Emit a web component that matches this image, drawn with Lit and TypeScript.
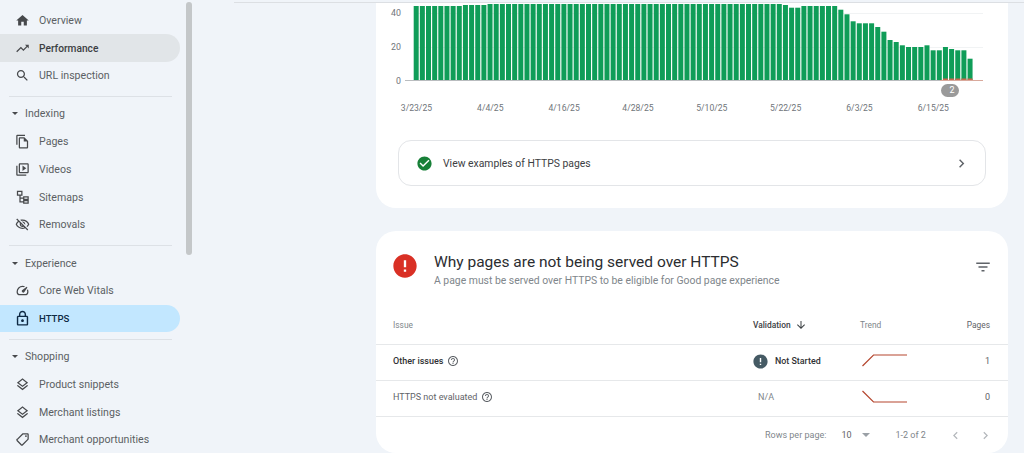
import { LitElement, html, css, svg } from "lit";
import { customElement } from "lit/decorators.js";

const P: Record<string, string> = {
  home: "M10 20v-6h4v6h5v-8h3L12 3 2 12h3v8z",
  trend: "M16 6l2.29 2.29-4.88 4.88-4-4L2 16.59 3.41 18l6-6 4 4 6.3-6.29L22 12V6z",
  search: "M15.5 14h-.79l-.28-.27C15.41 12.59 16 11.11 16 9.5 16 5.91 13.09 3 9.5 3S3 5.91 3 9.5 5.91 16 9.5 16c1.61 0 3.09-.59 4.23-1.57l.27.28v.79l5 4.99L20.49 19l-4.99-5zm-6 0C7.01 14 5 11.99 5 9.5S7.01 5 9.5 5 14 7.01 14 9.5 11.99 14 9.5 14z",
  pages: "M16 1H4c-1.1 0-2 .9-2 2v14h2V3h12V1zm-1 4H8c-1.1 0-1.99.9-1.99 2L6 21c0 1.1.89 2 1.99 2H19c1.1 0 2-.9 2-2V11l-6-6zM8 21V7h6v5h5v9H8z",
  videos: "M4 6H2v14c0 1.1.9 2 2 2h14v-2H4V6zm16-4H8c-1.1 0-2 .9-2 2v12c0 1.1.9 2 2 2h12c1.1 0 2-.9 2-2V4c0-1.1-.9-2-2-2zm0 14H8V4h12v12zM12 5.5v9l6-4.5z",
  sitemaps: "M3 1h9v8H9v3h4v-2h9v6h-9v-2H9v4h4v-2h9v6h-9v-2H7V9H3V1zm2 2v4h5V3H5zm10 9v2h5v-2h-5zm0 6v2h5v-2h-5z",
  removals: "M12 6c3.79 0 7.17 2.13 8.82 5.5-.59 1.22-1.42 2.27-2.41 3.12l1.41 1.41c1.39-1.23 2.49-2.77 3.18-4.53C21.27 7.11 17 4 12 4c-1.27 0-2.49.2-3.64.57l1.65 1.65C10.66 6.09 11.32 6 12 6zm-1.07 1.14L13 9.21c.57.25 1.03.71 1.28 1.28l2.07 2.07c.08-.34.14-.7.14-1.07C16.5 9.01 14.48 7 12 7c-.37 0-.72.05-1.07.14zM2.01 3.87l2.68 2.68C3.06 7.83 1.77 9.53 1 11.5 2.73 15.89 7 19 12 19c1.52 0 2.98-.29 4.32-.82l3.42 3.42 1.41-1.41L3.42 2.45 2.01 3.87zm7.5 7.5l2.61 2.61c-.04.01-.08.02-.12.02-1.38 0-2.5-1.12-2.5-2.5 0-.05.01-.08.01-.13zm-3.4-3.4l1.75 1.75c-.23.55-.36 1.15-.36 1.78 0 2.48 2.02 4.5 4.5 4.5.63 0 1.23-.13 1.77-.36l.98.98c-.88.24-1.8.38-2.75.38-3.79 0-7.17-2.13-8.82-5.5.7-1.43 1.72-2.61 2.93-3.53z",
  vitals: "M12 4.5a9.5 9.5 0 0 0-9.5 9.5c0 1.3.2 2.5.8 3.5.8 1.4 2.1 2.2 3.6 2.2h10.2c1.5 0 2.8-.8 3.6-2.2.6-1 .8-2.2.8-3.5 0-1.4-.3-2.7-.8-3.9l-1.6 1.6c.3.7.4 1.5.4 2.3 0 1-.2 1.8-.6 2.5-.4.7-1.1 1.2-1.8 1.2H6.9c-.7 0-1.4-.5-1.8-1.2-.4-.7-.6-1.5-.6-2.5A7.500 7.500 0 0 1 12 6.500c.8 0 1.6.1 2.3.4L16 5.300a9.500 9.500 0 0 0-4-.8zm6.700 1.300l-6.900 5.200a2.300 2.300 0 1 0 3.200 3.200l4.900-7.200-1.200-1.200z",
  lock: "M18 8h-1V6c0-2.76-2.24-5-5-5S7 3.24 7 6v2H6c-1.1 0-2 .9-2 2v10c0 1.1.9 2 2 2h12c1.1 0 2-.9 2-2V10c0-1.1-.9-2-2-2zM9 6c0-1.66 1.34-3 3-3s3 1.34 3 3v2H9V6zm9 14H6V10h12v10zm-6-3c1.1 0 2-.9 2-2s-.9-2-2-2-2 .9-2 2 .9 2 2 2z",
  layers: "M11.99 18.54l-7.37-5.73L3 14.07l9 7 9-7-1.63-1.27-7.38 5.74zM12 16l7.36-5.73L21 9l-9-7-9 7 1.63 1.27L12 16zm0-11.47L17.74 9 12 13.47 6.26 9 12 4.53z",
  tag: "M2.59 11.58l9-9C11.95 2.22 12.45 2 13 2h7c1.1 0 2 .9 2 2v7c0 .55-.22 1.05-.59 1.42l-9 9c-.36.36-.86.58-1.41.58s-1.05-.22-1.41-.59l-7-7C2.22 13.05 2 12.55 2 12s.23-1.06.59-1.42zM11 20.01l9-9.01V4h-7v-.01l-9 9 7 7.02zM17.5 5a1.5 1.5 0 1 1 0 3 1.5 1.5 0 0 1 0-3z",
  check: "M12 2C6.48 2 2 6.48 2 12s4.48 10 10 10 10-4.48 10-10S17.52 2 12 2zm-2 15l-5-5 1.41-1.41L10 14.17l7.59-7.59L19 8l-9 9z",
  error: "M12 2C6.48 2 2 6.48 2 12s4.48 10 10 10 10-4.48 10-10S17.52 2 12 2zm1 15h-2v-2h2v2zm0-4h-2V7h2v6z",
  help: "M11 18h2v-2h-2v2zm1-16C6.48 2 2 6.48 2 12s4.48 10 10 10 10-4.48 10-10S17.52 2 12 2zm0 18c-4.41 0-8-3.59-8-8s3.59-8 8-8 8 3.59 8 8-3.59 8-8 8zm0-14c-2.21 0-4 1.79-4 4h2c0-1.1.9-2 2-2s2 .9 2 2c0 2-3 1.75-3 5h2c0-2.25 3-2.5 3-5 0-2.21-1.79-4-4-4z",
  filter: "M10 18h4v-2h-4v2zM3 6v2h18V6H3zm3 7h12v-2H6v2z",
  right: "M10 6L8.59 7.41 13.17 12l-4.58 4.59L10 18l6-6z",
  left: "M15.41 7.41L14 6l-6 6 6 6 1.41-1.41L10.83 12z",
  down: "M20 12l-1.41-1.41L13 16.17V4h-2v12.17l-5.58-5.59L4 12l8 8 8-8z",
};

const icon = (name: string, cls = "") =>
  html`<svg class="ic ${cls}" viewBox="0 0 24 24" fill="currentColor"><path d=${P[name]}></path></svg>`;

type Item = { icon: string; label: string; state?: string };
type Group = { title?: string; items: Item[] };

const NAV: Group[] = [
  { items: [
    { icon: "home", label: "Overview" },
    { icon: "trend", label: "Performance", state: "grey" },
    { icon: "search", label: "URL inspection" },
  ] },
  { title: "Indexing", items: [
    { icon: "pages", label: "Pages" },
    { icon: "videos", label: "Videos" },
    { icon: "sitemaps", label: "Sitemaps" },
    { icon: "removals", label: "Removals" },
  ] },
  { title: "Experience", items: [
    { icon: "vitals", label: "Core Web Vitals" },
    { icon: "lock", label: "HTTPS", state: "blue" },
  ] },
  { title: "Shopping", items: [
    { icon: "layers", label: "Product snippets" },
    { icon: "layers", label: "Merchant listings" },
    { icon: "tag", label: "Merchant opportunities" },
  ] },
];

// Heights of the bars above the baseline, in pixels.
const run = (n: number, h: number) => Array<number>(n).fill(h);
const BARS: number[] = [
  ...run(8, 75), ...run(4, 76), ...run(48, 78),
  76, ...run(2, 73.3), ...run(6, 75), 71.3, 66.7, 59.7, ...run(3, 57.7), 54, 49.3,
  41, 39, 35.7, ...run(3, 34), 35.7, ...run(2, 30.7), 34, 32, 30.7, 30.7, 22.3,
];
const PITCH = 6.154;
const DATES = ["3/23/25", "4/4/25", "4/16/25", "4/28/25", "5/10/25", "5/22/25", "6/3/25", "6/15/25"];

@customElement("app-root")
export class AppRoot extends LitElement {
  static styles = css`
    :host {
      display: block;
      width: 1024px;
      height: 453px;
      overflow: hidden;
      background: #f0f4f9;
      font-family: Roboto, "Liberation Sans", sans-serif;
      color: #444746;
    }
    * { box-sizing: border-box; }
    .page { display: flex; height: 453px; position: relative; }
    .ic { width: 14px; height: 14px; flex: none; display: block; }

    /* sidebar */
    .side { width: 234px; flex: none; padding-top: 6.5px; }
    .scroll {
      position: absolute; left: 186px; top: 2px; width: 5.5px; height: 253px;
      border-radius: 3px; background: #c4c7c9;
    }
    .rule { width: 163px; height: 1px; margin: 6.4px 0 3.2px 9px; background: #dde1e6; }
    .row {
      width: 180px; height: 27.7px; display: flex; align-items: center;
      padding-left: 15px; font-size: 10.6px;
      border-radius: 0 14px 14px 0; color: #5b5f63;
    }
    .row .ic { width: 15px; height: 15px; margin-right: 9px; color: #47494c; }
    .row .ic.lock { width: 17px; height: 17px; margin-left: -1px; margin-right: 8px; }
    .row.grey { background: #e1e5e8; color: #3c4043; font-weight: 500; font-size: 10.2px; }
    .row.blue { background: #c2e7ff; color: #0f2a44; font-weight: 500; font-size: 9.6px; }
    .row.blue .ic { color: #0f2a44; }
    .head { width: 180px; height: 27.7px; display: flex; align-items: center; padding-left: 12px; font-size: 10.6px; color: #5b5f63; }
    .caret { width: 0; height: 0; margin-right: 7px; border: 3px solid transparent; border-top: 3.5px solid #47494c; border-bottom: 0; }

    /* main */
    .main { flex: 1; min-width: 0; display: flex; flex-direction: column; gap: 23px; padding: 2px 16px 0 142px; position: relative; }
    .topline { position: absolute; left: 0; right: 0; top: 2px; height: 1px; background: #dcdfe3; }
    .card { background: #fff; width: 632px; flex: none; }
    .c1 { height: 206px; border-radius: 0 0 20px 20px; padding-top: 2px; }
    .c2 { height: 222px; border-radius: 20px; }

    /* chart */
    .chart { display: flex; height: 77px; }
    .yaxis {
      width: 25px; flex: none; height: 82px; display: flex; flex-direction: column;
      justify-content: space-between; align-items: flex-end; margin-top: 2px;
      font-size: 8.8px; line-height: 14px; color: #70757a;
    }
    .plot { position: relative; width: 578px; margin-left: 4px; height: 77px; }
    .grid { position: absolute; left: 10px; right: 0; height: 1px; background: #f1f3f4; }
    .bars { position: absolute; inset: 0; width: 578px; height: 77px; display: block; }
    .pill {
      position: absolute; left: 535.5px; top: 80px; width: 18px; height: 13px;
      border-radius: 7px; background: #9a9a9a; color: #fff;
      font-size: 9px; line-height: 13px; text-align: center; padding-left: 5px;
    }
    .dates {
      display: grid; grid-template-columns: repeat(8, 73.85px);
      margin: 20px 0 0 3.5px; font-size: 8.6px; line-height: 14px; color: #70757a; text-align: center;
    }
    .link {
      display: flex; align-items: center; height: 46px; margin: 25px 22px 0;
      border: 1px solid #e3e5e8; border-radius: 13px; padding: 0 15px 0 17px;
      font-size: 10.4px; color: #3c4043;
    }
    .link .ok { width: 17px; height: 17px; color: #188038; margin-right: 10px; }
    .link .ch { margin-left: auto; width: 17px; height: 17px; color: #5f6368; }

    /* issues card */
    .hdr { display: flex; height: 76px; padding: 19px 16px 0 15px; }
    .hdr .err { width: 28px; height: 28px; color: #d93025; margin: 2px 15px 0 0; }
    .title { font-size: 15.5px; line-height: 24px; color: #2b2d30; }
    .sub { font-size: 10.4px; line-height: 14px; color: #80868b; }
    .hdr .flt { width: 18px; height: 18px; margin: 8px 0 0 auto; color: #5f6368; }
    .tr {
      display: grid; grid-template-columns: 360px 107px 60px 71px; align-items: center;
      padding: 0 17px 3px; height: 36px; border-bottom: 1px solid #e6e8ea; font-size: 9px; color: #5f6368;
    }
    .tr.th { height: 38px; padding-bottom: 2px; font-size: 8.4px; color: #80868b; }
    .th .v { display: flex; align-items: center; gap: 4px; font-weight: 500; color: #3c4043; font-size: 8.4px; }
    .th .v .ic { width: 12px; height: 12px; }
    .num { text-align: right; padding-right: 1px; color: #5f6368; }
    .name { display: flex; align-items: center; gap: 4px; }
    .name .ic { width: 12px; height: 12px; color: #5f6368; }
    .name.b { font-weight: 500; color: #303134; }
    .status { display: flex; align-items: center; gap: 5px; font-weight: 500; font-size: 8.9px; color: #303134; }
    .status .ic { width: 17px; height: 17px; color: #455a64; margin-left: -1px; margin-right: 1px; }
    .na { padding-left: 5px; color: #80868b; }
    .spark { width: 46px; height: 14px; display: block; margin-left: 2px; }
    .foot { display: flex; align-items: center; height: 36px; font-size: 9px; color: #80868b; white-space: nowrap; padding-left: 389px; }
    .foot .n { margin-left: 15px; color: #5f6368; }
    .foot .tri { margin-left: 10px; width: 0; height: 0; border: 4px solid transparent; border-top: 4px solid #9aa0a6; border-bottom: 0; }
    .foot .r { margin-left: 26px; }
    .foot .ic { width: 15px; height: 15px; color: #b4b8bc; }
    .foot .p { margin-left: 22px; }
    .foot .q { margin-left: 15px; }
  `;

  private chart() {
    return html`
      <div class="chart">
        <div class="yaxis"><span>40</span><span>20</span><span>0</span></div>
        <div class="plot">
          <div class="grid" style="top:9px"></div>
          <div class="grid" style="top:43px"></div>
          <svg class="bars" viewBox="0 0 578 77">
            ${BARS.map((h, i) => {
              const x = 8.7 + i * PITCH;
              return svg`<rect x=${x} y=${77 - h} width="5" height=${h} fill="#0f9d58"></rect>
                ${i >= 86 ? svg`<rect x=${x} y="74.5" width="5" height="2.5" fill="#c8694f"></rect>` : ""}`;
            })}
            <rect x="0" y="76" width="578" height="1" fill="#b9bcbf"></rect>
            <rect x="535" y="76" width="43" height="1" fill="#d9a99c"></rect>
          </svg>
          <div class="pill">2</div>
        </div>
      </div>
      <div class="dates">${DATES.map((d) => html`<span>${d}</span>`)}</div>
    `;
  }

  private spark(pts: string) {
    return html`<svg class="spark" viewBox="0 0 46 14"><polyline points=${pts} fill="none" stroke="#b5472f" stroke-width="1.2"></polyline></svg>`;
  }

  render() {
    return html`
      <div class="page">
        <nav class="side">
          ${NAV.map((g, gi) => html`
            ${gi > 0 ? html`<div class="rule"></div>` : ""}
            ${g.title ? html`<div class="head"><span class="caret"></span>${g.title}</div>` : ""}
            ${g.items.map((it) => html`<div class="row ${it.state ?? ""}">${icon(it.icon, it.icon)}<span>${it.label}</span></div>`)}
          `)}
        </nav>
        <div class="scroll"></div>
        <main class="main">
          <div class="topline"></div>
          <section class="card c1">
            ${this.chart()}
            <div class="link">${icon("check", "ok")}<span>View examples of HTTPS pages</span>${icon("right", "ch")}</div>
          </section>
          <section class="card c2">
            <div class="hdr">
              ${icon("error", "err")}
              <div>
                <div class="title">Why pages are not being served over HTTPS</div>
                <div class="sub">A page must be served over HTTPS to be eligible for Good page experience</div>
              </div>
              ${icon("filter", "flt")}
            </div>
            <div class="tr th">
              <span>Issue</span>
              <span class="v">Validation ${icon("down")}</span>
              <span>Trend</span>
              <span class="num">Pages</span>
            </div>
            <div class="tr">
              <span class="name b">Other issues ${icon("help")}</span>
              <span class="status">${icon("error")}<span>Not Started</span></span>
              ${this.spark("0.5,12 11.5,1 45,1")}
              <span class="num">1</span>
            </div>
            <div class="tr">
              <span class="name">HTTPS not evaluated ${icon("help")}</span>
              <span class="na">N/A</span>
              ${this.spark("0.5,1 11.5,12 45,12")}
              <span class="num">0</span>
            </div>
            <div class="foot">
              <span>Rows per page:</span>
              <span class="n">10</span>
              <span class="tri"></span>
              <span class="r">1-2 of 2</span>
              ${icon("left", "p")}
              ${icon("right", "q")}
            </div>
          </section>
        </main>
      </div>
    `;
  }
}
